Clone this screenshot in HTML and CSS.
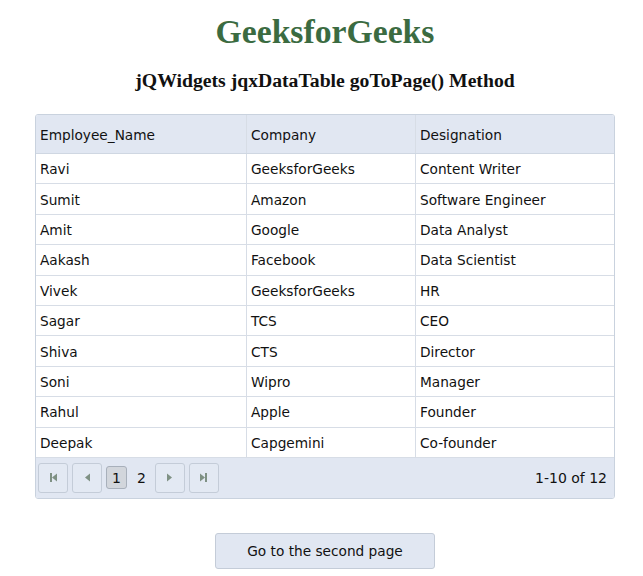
FILE: index.html
```html
<!DOCTYPE html>
<html>
<head>
<meta charset="utf-8">
<link rel="stylesheet" href="styles.css">
</head>
<body>
<div class="page">
  <h1 class="title">GeeksforGeeks</h1>
  <h3 class="subtitle">jQWidgets jqxDataTable goToPage() Method</h3>
  <div class="grid">
    <div class="row head">
      <div class="cell c1">Employee_Name</div>
      <div class="cell c2">Company</div>
      <div class="cell c3">Designation</div>
    </div>
    <div class="row"><div class="cell c1">Ravi</div><div class="cell c2">GeeksforGeeks</div><div class="cell c3">Content Writer</div></div>
    <div class="row"><div class="cell c1">Sumit</div><div class="cell c2">Amazon</div><div class="cell c3">Software Engineer</div></div>
    <div class="row"><div class="cell c1">Amit</div><div class="cell c2">Google</div><div class="cell c3">Data Analyst</div></div>
    <div class="row"><div class="cell c1">Aakash</div><div class="cell c2">Facebook</div><div class="cell c3">Data Scientist</div></div>
    <div class="row"><div class="cell c1">Vivek</div><div class="cell c2">GeeksforGeeks</div><div class="cell c3">HR</div></div>
    <div class="row"><div class="cell c1">Sagar</div><div class="cell c2">TCS</div><div class="cell c3">CEO</div></div>
    <div class="row"><div class="cell c1">Shiva</div><div class="cell c2">CTS</div><div class="cell c3">Director</div></div>
    <div class="row"><div class="cell c1">Soni</div><div class="cell c2">Wipro</div><div class="cell c3">Manager</div></div>
    <div class="row"><div class="cell c1">Rahul</div><div class="cell c2">Apple</div><div class="cell c3">Founder</div></div>
    <div class="row"><div class="cell c1">Deepak</div><div class="cell c2">Capgemini</div><div class="cell c3">Co-founder</div></div>
    <div class="pager">
      <div class="pbtns">
        <span class="pbtn"><svg width="9" height="11" viewBox="0 0 9 11"><rect x="1" y="1" width="2" height="9" fill="#7f9184"/><path d="M8 1.5 L3 5.5 L8 9.5 Z" fill="#7f9184"/></svg></span>
        <span class="pbtn"><svg width="9" height="11" viewBox="0 0 9 11"><path d="M7 1.5 L2 5.5 L7 9.5 Z" fill="#7f9184"/></svg></span>
        <span class="pnum active">1</span>
        <span class="pnum">2</span>
        <span class="pbtn"><svg width="9" height="11" viewBox="0 0 9 11"><path d="M2 1.5 L7 5.5 L2 9.5 Z" fill="#7f9184"/></svg></span>
        <span class="pbtn"><svg width="9" height="11" viewBox="0 0 9 11"><path d="M1 1.5 L6 5.5 L1 9.5 Z" fill="#7f9184"/><rect x="6" y="1" width="2" height="9" fill="#7f9184"/></svg></span>
      </div>
      <div class="pinfo">1-10 of 12</div>
    </div>
  </div>
  <button class="go">Go to the second page</button>
</div>
</body>
</html>
```
FILE: styles.css
```css
html, body { margin: 0; padding: 0; background: #fff; }
.page {
  display: flex;
  flex-direction: column;
  align-items: center;
  padding: 0 6px 0 13px;
}
.title {
  font-family: "Liberation Serif", serif;
  font-weight: bold;
  font-size: 33.7px;
  color: #3b6b41;
  margin: 13px 0 0 0;
  line-height: 38px;
}
.subtitle {
  font-family: "Liberation Serif", serif;
  font-weight: bold;
  font-size: 19.7px;
  color: #111;
  margin: 18px 0 0 0;
  line-height: 22px;
}
.grid {
  margin-top: 23px;
  width: 578px;
  border: 1px solid #c9d2de;
  border-radius: 3px;
  font-family: "DejaVu Sans", Verdana, sans-serif;
  font-size: 13.7px;
  color: #111;
  overflow: hidden;
}
.row {
  display: flex;
  border-bottom: 1px solid #d7dde6;
  box-sizing: content-box;
  height: 29.4px;
}
.row.head {
  height: 38px;
  background: #e1e7f2;
  border-bottom: 1px solid #cfd7e2;
}
.cell {
  display: flex;
  align-items: center;
  padding-left: 4px;
  padding-top: 1px;
  box-sizing: border-box;
  border-right: 1px solid #d7dde6;
  white-space: nowrap;
}
.c1 { width: 211px; }
.c2 { width: 169px; }
.c3 { flex: 1; border-right: none; }
.pager {
  display: flex;
  align-items: center;
  justify-content: space-between;
  height: 40px;
  background: #e1e7f2;
  padding: 0 7px 0 2px;
}
.pbtns { display: flex; align-items: center; gap: 4px; }
.pbtn {
  width: 28px;
  height: 28px;
  border: 1px solid #c4ccd8;
  border-radius: 3px;
  display: flex;
  align-items: center;
  justify-content: center;
  background: #e3e9f3;
}
.pnum {
  font-size: 14px;
  padding: 0 4px;
  height: 21px;
  display: flex;
  align-items: center;
  border: 1px solid transparent;
}
.pnum.active {
  border: 1px solid #a8b0bb;
  border-radius: 3px;
  background: #d2d6dc;
  padding: 0 5px;
  margin-right: 1px;
}
.pinfo { font-size: 14px; }
.go {
  margin-top: 34px;
  width: 220px;
  height: 36px;
  background: #e1e7f2;
  border: 1px solid #c4ccd8;
  border-radius: 3px;
  font-family: "DejaVu Sans", Verdana, sans-serif;
  font-size: 13.7px;
  color: #111;
}
```
